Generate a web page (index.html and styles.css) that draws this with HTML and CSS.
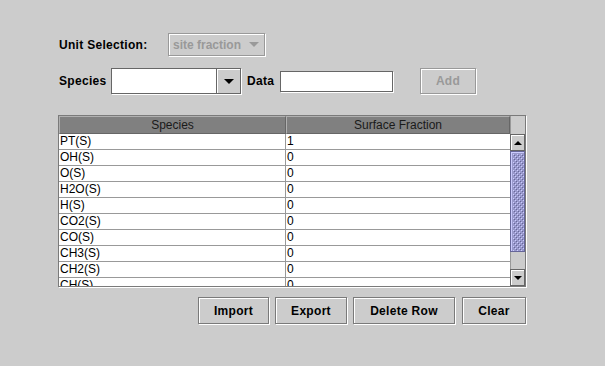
FILE: index.html
```
<html>
  <head>
    <link rel="stylesheet" href="styles.css">
  </head>
  <body>
    <div class="panel">
      <div class="row unit-row">
        <span class="label unit-label">Unit Selection:</span>
        <div class="combo combo-disabled">
          <span class="combo-text">site fraction</span>
          <span class="caret caret-disabled"></span>
        </div>
      </div>

      <div class="row entry-row">
        <span class="label species-label">Species</span>
        <div class="combo-edit">
          <span class="combo-field"></span>
          <span class="combo-btn"><span class="caret"></span></span>
        </div>
        <span class="label data-label">Data</span>
        <span class="text-field"></span>
        <button class="btn btn-add" disabled>Add</button>
      </div>

      <div class="scroll-pane">
        <div class="table">
          <div class="thead">
            <div class="th col-a">Species</div>
            <div class="th col-b">Surface Fraction</div>
          </div>
          <div class="tbody">
            <div class="tr"><div class="td col-a">PT(S)</div><div class="td col-b">1</div></div>
            <div class="tr"><div class="td col-a">OH(S)</div><div class="td col-b">0</div></div>
            <div class="tr"><div class="td col-a">O(S)</div><div class="td col-b">0</div></div>
            <div class="tr"><div class="td col-a">H2O(S)</div><div class="td col-b">0</div></div>
            <div class="tr"><div class="td col-a">H(S)</div><div class="td col-b">0</div></div>
            <div class="tr"><div class="td col-a">CO2(S)</div><div class="td col-b">0</div></div>
            <div class="tr"><div class="td col-a">CO(S)</div><div class="td col-b">0</div></div>
            <div class="tr"><div class="td col-a">CH3(S)</div><div class="td col-b">0</div></div>
            <div class="tr"><div class="td col-a">CH2(S)</div><div class="td col-b">0</div></div>
            <div class="tr"><div class="td col-a">CH(S)</div><div class="td col-b">0</div></div>
          </div>
        </div>
        <div class="vbar">
          <div class="corner"></div>
          <div class="sb-btn"><span class="tri-up"></span></div>
          <div class="thumb">
            <svg class="bumps" width="100%" height="100%">
              <defs>
                <pattern id="bump" width="4" height="4" patternUnits="userSpaceOnUse">
                  <rect x="0" y="0" width="1" height="1" fill="#ccccff"/>
                  <rect x="1" y="1" width="1" height="1" fill="#666699"/>
                  <rect x="2" y="2" width="1" height="1" fill="#ccccff"/>
                  <rect x="3" y="3" width="1" height="1" fill="#666699"/>
                </pattern>
              </defs>
              <rect x="2" y="2" width="100%" height="100%" fill="url(#bump)"/>
            </svg>
          </div>
          <div class="track"></div>
          <div class="sb-btn"><span class="tri-down"></span></div>
        </div>
      </div>

      <div class="actions">
        <button class="btn btn-import">Import</button>
        <button class="btn btn-export">Export</button>
        <button class="btn btn-delete">Delete Row</button>
        <button class="btn btn-clear">Clear</button>
      </div>
    </div>
  </body>
</html>
```

FILE: styles.css
```
html, body {
  margin: 0;
  padding: 0;
}
body {
  --control: #cccccc;
  --dark: #666666;
  --mid: #999999;
  --light: #ffffff;
  background: var(--control);
  color: #000;
  font-family: "Liberation Sans", Arial, sans-serif;
  font-size: 12px;
  width: 605px;
  height: 366px;
  overflow: hidden;
}

.panel {
  display: flex;
  flex-direction: column;
  padding: 33px 0 0 58px;
  width: 469px;
}
.row {
  display: flex;
  align-items: center;
}
.label {
  font-weight: bold;
  letter-spacing: 0.3px;
  padding-left: 1px;
  box-sizing: border-box;
  white-space: nowrap;
}

/* unit selection */
.unit-row {
  height: 23px;
}
.unit-label {
  width: 110px;
}
.combo {
  box-sizing: border-box;
  width: 97px;
  height: 23px;
  display: flex;
  align-items: center;
  padding-left: 4px;
  border: 1px solid var(--mid);
  box-shadow: inset 1px 1px 0 var(--light), 1px 1px 0 var(--light);
}
.combo-text {
  font-weight: bold;
  color: var(--mid);
  width: 76px;
  white-space: nowrap;
}
.caret {
  width: 0;
  height: 0;
  border-left: 5px solid transparent;
  border-right: 5px solid transparent;
  border-top: 5px solid #000;
}
.caret-disabled {
  border-top-color: var(--mid);
}

/* species / data entry */
.entry-row {
  height: 26px;
  margin-top: 12px;
}
.species-label {
  width: 53px;
}
.combo-edit {
  box-sizing: border-box;
  width: 130px;
  height: 26px;
  display: flex;
  border: 1px solid var(--dark);
  box-shadow: 1px 1px 0 var(--light);
}
.combo-field {
  flex: 1;
  background: var(--light);
  border-right: 1px solid var(--dark);
}
.combo-btn {
  width: 23px;
  display: flex;
  align-items: center;
  justify-content: center;
  background: var(--control);
  box-shadow: inset 1px 1px 0 var(--light);
}
.data-label {
  width: 33px;
  margin-left: 6px;
  padding-left: 0;
}
.text-field {
  box-sizing: border-box;
  width: 113px;
  height: 21px;
  background: var(--light);
  border: 1px solid var(--dark);
  box-shadow: 1px 1px 0 var(--light);
}

/* buttons */
.btn {
  box-sizing: border-box;
  height: 27px;
  padding: 0;
  margin: 0;
  font-family: "Liberation Sans", Arial, sans-serif;
  font-size: 12px;
  font-weight: bold;
  letter-spacing: 0.3px;
  color: #000;
  background: var(--control);
  border: 1px solid #7a7a7a;
  border-radius: 0;
  box-shadow: inset 1px 1px 0 var(--light), 1px 1px 0 var(--light);
}
.btn-add {
  width: 56px;
  height: 26px;
  margin-left: 27px;
  color: var(--mid);
  border-color: var(--mid);
}

/* table */
.scroll-pane {
  box-sizing: border-box;
  display: flex;
  width: 468px;
  height: 172px;
  margin-top: 21px;
  border: 1px solid #7a7a7a;
  box-shadow: 1px 1px 0 var(--light);
}
.table {
  width: 451px;
  display: flex;
  flex-direction: column;
}
.thead {
  display: flex;
  height: 18px;
}
.th {
  box-sizing: border-box;
  height: 18px;
  background: #808080;
  color: #1a1a1a;
  text-align: center;
  line-height: 16px;
  border-top: 1px solid #b0b0b0;
  border-left: 1px solid #b0b0b0;
  border-right: 1px solid var(--dark);
  border-bottom: 1px solid var(--dark);
}
.col-a {
  width: 227px;
}
.col-b {
  width: 224px;
}
.tbody {
  height: 152px;
  overflow: hidden;
  background: var(--light);
}
.tr {
  display: flex;
  box-sizing: border-box;
  height: 16px;
  border-bottom: 1px solid var(--mid);
}
.td {
  box-sizing: border-box;
  line-height: 15px;
  padding-left: 1px;
  white-space: nowrap;
}
.td.col-a {
  border-right: 1px solid var(--mid);
}

/* scrollbar */
.vbar {
  width: 16px;
  display: flex;
  flex-direction: column;
  background: var(--control);
}
.corner {
  height: 18px;
  box-sizing: border-box;
  border-left: 1px solid var(--mid);
}
.sb-btn {
  box-sizing: border-box;
  height: 17px;
  display: flex;
  align-items: center;
  justify-content: center;
  border: 1px solid var(--dark);
  box-shadow: inset 1px 1px 0 var(--light);
}
.tri-up, .tri-down {
  width: 0;
  height: 0;
  border-left: 4px solid transparent;
  border-right: 4px solid transparent;
}
.tri-up {
  border-bottom: 4px solid #000;
}
.tri-down {
  border-top: 4px solid #000;
}
.thumb {
  box-sizing: border-box;
  height: 101px;
  background: #9999cc;
  border: 1px solid #666699;
  box-shadow: inset 1px 1px 0 #ccccff;
  overflow: hidden;
}
.bumps {
  display: block;
}
.track {
  box-sizing: border-box;
  height: 17px;
  border-left: 1px solid var(--mid);
}

/* bottom actions */
.actions {
  display: flex;
  justify-content: flex-end;
  gap: 6px;
  margin-top: 10px;
  padding-right: 1px;
}
.btn-import {
  width: 71px;
}
.btn-export {
  width: 72px;
}
.btn-delete {
  width: 102px;
}
.btn-clear {
  width: 64px;
  margin-left: 1px;
}
```
